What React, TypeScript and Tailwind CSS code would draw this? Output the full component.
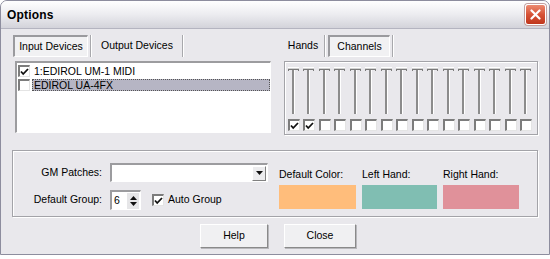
const CHANNELS = Array.from({ length: 16 }, (_, i) => i);

function CheckMark() {
  return (
    <svg width="9" height="8" viewBox="0 0 9 8" className="block">
      <path d="M1 3.5 L3.2 6 L8 1" fill="none" stroke="#111" strokeWidth="1.8" />
    </svg>
  );
}

function Box({ checked = false }: { checked?: boolean }) {
  return (
    <span className="flex h-[12px] w-[12px] shrink-0 items-center justify-center border-t-2 border-l-2 border-t-[#7c7c7c] border-l-[#7c7c7c] border-r border-b border-r-[#e4e4e4] border-b-[#e4e4e4] bg-white">
      {checked && <CheckMark />}
    </span>
  );
}

function Slider() {
  return (
    <svg width="12" height="48" viewBox="0 0 12 48" className="block">
      <rect x="4" y="4" width="2" height="44" fill="#8c8c8c" />
      <rect x="6" y="4" width="1" height="44" fill="#ffffff" />
      <rect x="0" y="1" width="11" height="3" fill="#d2d2d2" />
      <rect x="0" y="1" width="11" height="1" fill="#ffffff" />
      <rect x="0" y="3" width="11" height="1" fill="#7a7a7a" />
      <rect x="0" y="3" width="1" height="2" fill="#7a7a7a" />
      <rect x="10" y="3" width="1" height="2" fill="#7a7a7a" />
    </svg>
  );
}

function Tab({ label, active, width }: { label: string; active?: boolean; width: string }) {
  return (
    <div
      className={`flex items-center justify-center ${width} ${
        active
          ? "border-t-2 border-l-2 border-t-[#9a9a9e] border-l-[#9a9a9e] border-r border-b border-r-white border-b-white bg-[#f1f1f3]"
          : ""
      }`}
    >
      {label}
    </div>
  );
}

function Sep() {
  return <div className="mx-[2px] h-full w-[2px] border-l border-l-[#a8a8ac] border-r border-r-white" />;
}

export default function App() {
  return (
    <div className="h-[259px] w-[550px] bg-white font-['Liberation_Sans',Arial,sans-serif] text-[10.5px] text-black">
      <div className="flex h-[255px] flex-col overflow-hidden rounded-t-[7px] border border-[#8d8d9e] bg-[#e9e8ec]">
        <div className="flex h-[28px] shrink-0 items-center justify-between border-b border-b-[#b4b4c0] bg-gradient-to-b from-[#ffffff] via-[#ececf0] to-[#d3d3da] pl-[6px] pr-[3px]">
          <span className="text-[12px] font-bold tracking-[0.2px]">Options</span>
          <div className="flex h-[21px] w-[21px] items-center justify-center rounded-[3px] border border-white bg-gradient-to-b from-[#ec8a70] via-[#d65236] to-[#c0361c] shadow-[0_0_0_1px_#c2a0a0]">
            <svg width="11" height="11" viewBox="0 0 11 11">
              <path d="M1.5 1.5 L9.5 9.5 M9.5 1.5 L1.5 9.5" stroke="#fff" strokeWidth="2.2" strokeLinecap="round" />
            </svg>
          </div>
        </div>

        <div className="flex flex-1 flex-col px-[11px] pt-[6px]">
          <div className="flex gap-[12px]">
            <div className="flex w-[260px] flex-col">
              <div className="flex h-[22px] items-stretch pl-[1px]">
                <Tab label="Input Devices" active width="w-[75px]" />
                <Sep />
                <Tab label="Output Devices" width="w-[86px]" />
                <Sep />
              </div>
              <div className="ml-[3px] mt-[4px] h-[72px] w-[256px] border-t-2 border-l-2 border-t-[#9c9c9f] border-l-[#9c9c9f] border-r border-b border-r-white border-b-white bg-white pl-[1px] pt-[2px]">
                <div className="flex h-[12px] items-center gap-[4px]">
                  <Box checked />
                  <span className="leading-none">1:EDIROL UM-1 MIDI</span>
                </div>
                <div className="mt-[2px] flex h-[12px] items-center gap-[2px]">
                  <Box />
                  <span className="flex h-full flex-1 items-center border border-dotted border-[#555] bg-[#b6b5c4] pl-px leading-none">
                    EDIROL UA-4FX
                  </span>
                </div>
              </div>
            </div>

            <div className="flex w-[254px] flex-col">
              <div className="flex h-[22px] items-stretch">
                <Tab label="Hands" width="w-[38px]" />
                <Sep />
                <Tab label="Channels" active width="w-[62px]" />
                <Sep />
              </div>
              <div className="mt-[4px] h-[74px] border border-[#a3a3a8] px-[1px] pt-[4px] shadow-[inset_1px_1px_0_#fff,1px_1px_0_#fff]">
                <div className="grid grid-cols-[repeat(16,15.5px)] justify-items-center">
                  {CHANNELS.map((c) => (
                    <Slider key={c} />
                  ))}
                </div>
                <div className="mt-[5px] grid grid-cols-[repeat(16,15.5px)] justify-items-center">
                  {CHANNELS.map((c) => (
                    <Box key={c} checked={c < 2} />
                  ))}
                </div>
              </div>
            </div>
          </div>

          <div className="mt-[15px] flex h-[67px] border border-[#a3a3a8] pt-[12px] shadow-[inset_1px_1px_0_#fff,1px_1px_0_#fff]">
            <div className="flex flex-col gap-[8px]">
              <div className="flex h-[19px] items-center">
                <span className="w-[97px] pr-[8px] text-right">GM Patches:</span>
                <div className="flex h-[19px] w-[158px] items-center justify-end border-t-2 border-l-2 border-t-[#9c9c9f] border-l-[#9c9c9f] border-r border-b border-r-white border-b-white bg-white pr-px">
                  <div className="flex h-[15px] w-[14px] items-center justify-center border border-t-white border-l-white border-r-[#808080] border-b-[#808080] bg-[#ececee]">
                    <svg width="7" height="4" viewBox="0 0 7 4">
                      <path d="M0 0 H7 L3.5 4 Z" fill="#111" />
                    </svg>
                  </div>
                </div>
              </div>
              <div className="flex h-[20px] items-center">
                <span className="w-[97px] pr-[8px] text-right">Default Group:</span>
                <div className="flex h-[20px] w-[31px] items-center justify-between border-t-2 border-l-2 border-t-[#9c9c9f] border-l-[#9c9c9f] border-r border-b border-r-white border-b-white bg-white pl-[2px] pr-px">
                  <span>6</span>
                  <div className="flex h-[16px] w-[12px] flex-col items-center justify-center gap-[2px] bg-[#e6e6e8]">
                    <svg width="7" height="4" viewBox="0 0 7 4">
                      <path d="M0 4 H7 L3.5 0 Z" fill="#111" />
                    </svg>
                    <svg width="7" height="4" viewBox="0 0 7 4">
                      <path d="M0 0 H7 L3.5 4 Z" fill="#111" />
                    </svg>
                  </div>
                </div>
                <span className="ml-[11px] mr-[4px]">
                  <Box checked />
                </span>
                <span>Auto Group</span>
              </div>
            </div>

            <div className="ml-[11px] flex gap-[6px] pt-[4px]">
              <div className="flex flex-col">
                <span className="h-[18px]">Default Color:</span>
                <div className="h-[24px] w-[77px] bg-[#ffbd7b]" />
              </div>
              <div className="flex flex-col">
                <span className="h-[18px]">Left Hand:</span>
                <div className="h-[24px] w-[75px] bg-[#80beb2]" />
              </div>
              <div className="flex flex-col">
                <span className="h-[18px]">Right Hand:</span>
                <div className="h-[24px] w-[76px] bg-[#e0919a]" />
              </div>
            </div>
          </div>

          <div className="mt-[7px] flex justify-center gap-[16px] pl-[6px]">
            <button className="flex h-[24px] w-[68px] items-center justify-center border border-t-white border-l-white border-r-[#8a8a8a] border-b-[#8a8a8a] bg-[#f0f0f2] shadow-[1px_1px_0_#b8b8bc]">
              Help
            </button>
            <button className="flex h-[24px] w-[72px] items-center justify-center border border-t-white border-l-white border-r-[#8a8a8a] border-b-[#8a8a8a] bg-[#f0f0f2] shadow-[1px_1px_0_#b8b8bc]">
              Close
            </button>
          </div>
        </div>
      </div>
    </div>
  );
}
